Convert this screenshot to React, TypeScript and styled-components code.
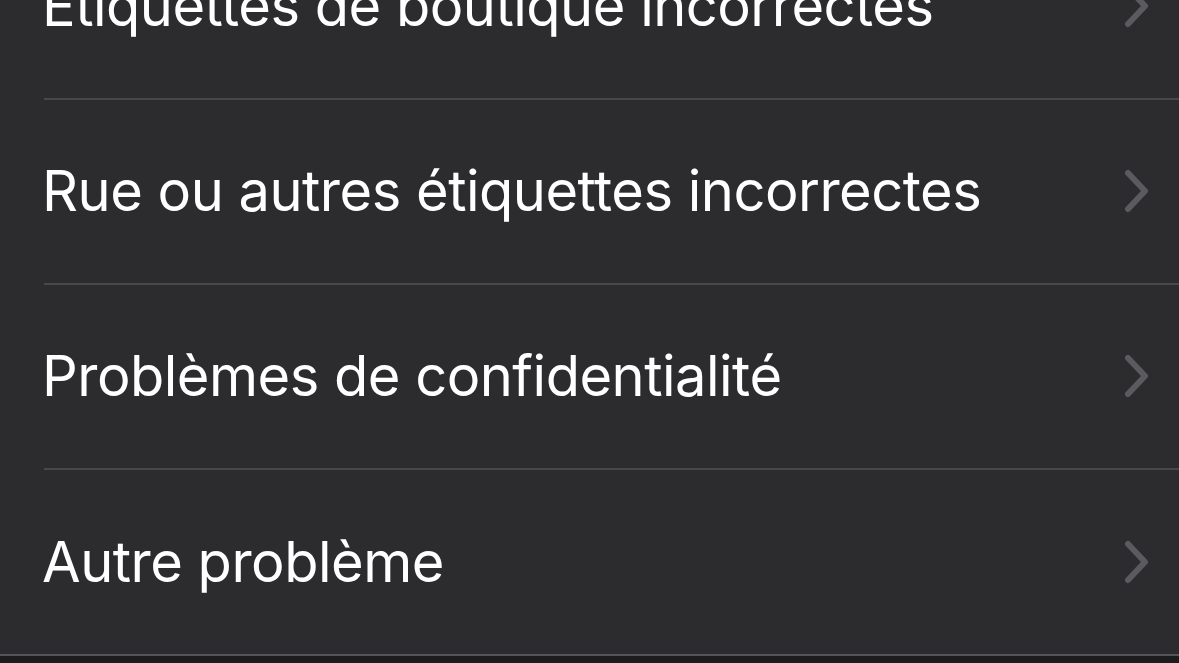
import styled, { createGlobalStyle } from "styled-components";

const GlobalStyle = createGlobalStyle`
  html, body {
    margin: 0;
    padding: 0;
    background: #1c1c1e;
  }
  body {
    font-family: Inter, "Noto Sans", "Liberation Sans", sans-serif;
    -webkit-font-smoothing: antialiased;
  }
`;

const Screen = styled.div`
  width: 100%;
  height: 100vh;
  overflow: hidden;
  background: #1c1c1e;
`;

// list is scrolled: first row is partly above the top edge
const List = styled.ul`
  list-style: none;
  margin: -86px 0 0;
  padding: 0;
  background: #2c2c2e;
  border-bottom: 2px solid #545458;
`;

const Row = styled.li`
  display: flex;
  align-items: center;
  height: 185px;
  padding-left: 44px;
`;

const RowInner = styled.div<{ $last?: boolean }>`
  flex: 1;
  height: 100%;
  display: flex;
  align-items: center;
  justify-content: space-between;
  padding-right: 29px;
  box-sizing: border-box;
  border-bottom: ${(p) => (p.$last ? "none" : "2px solid #48484a")};
  margin-bottom: ${(p) => (p.$last ? "0" : "-1px")};
`;

const Label = styled.span`
  color: #ffffff;
  font-size: 56px;
  font-weight: 400;
  letter-spacing: -0.5px;
  margin-left: -2px;
  white-space: nowrap;
`;

const Chevron = () => (
  <svg width="26" height="44" viewBox="0 0 26 44" fill="none">
    <path
      d="M4 4 L21 22 L4 40"
      stroke="#5b5b5f"
      strokeWidth="6"
      strokeLinecap="round"
      strokeLinejoin="round"
    />
  </svg>
);

const items = [
  "Étiquettes de boutique incorrectes",
  "Rue ou autres étiquettes incorrectes",
  "Problèmes de confidentialité",
  "Autre problème",
];

export default function App() {
  return (
    <Screen>
      <GlobalStyle />
      <List>
        {items.map((text, i) => (
          <Row key={text}>
            <RowInner $last={i === items.length - 1}>
              <Label>{text}</Label>
              <Chevron />
            </RowInner>
          </Row>
        ))}
      </List>
    </Screen>
  );
}
